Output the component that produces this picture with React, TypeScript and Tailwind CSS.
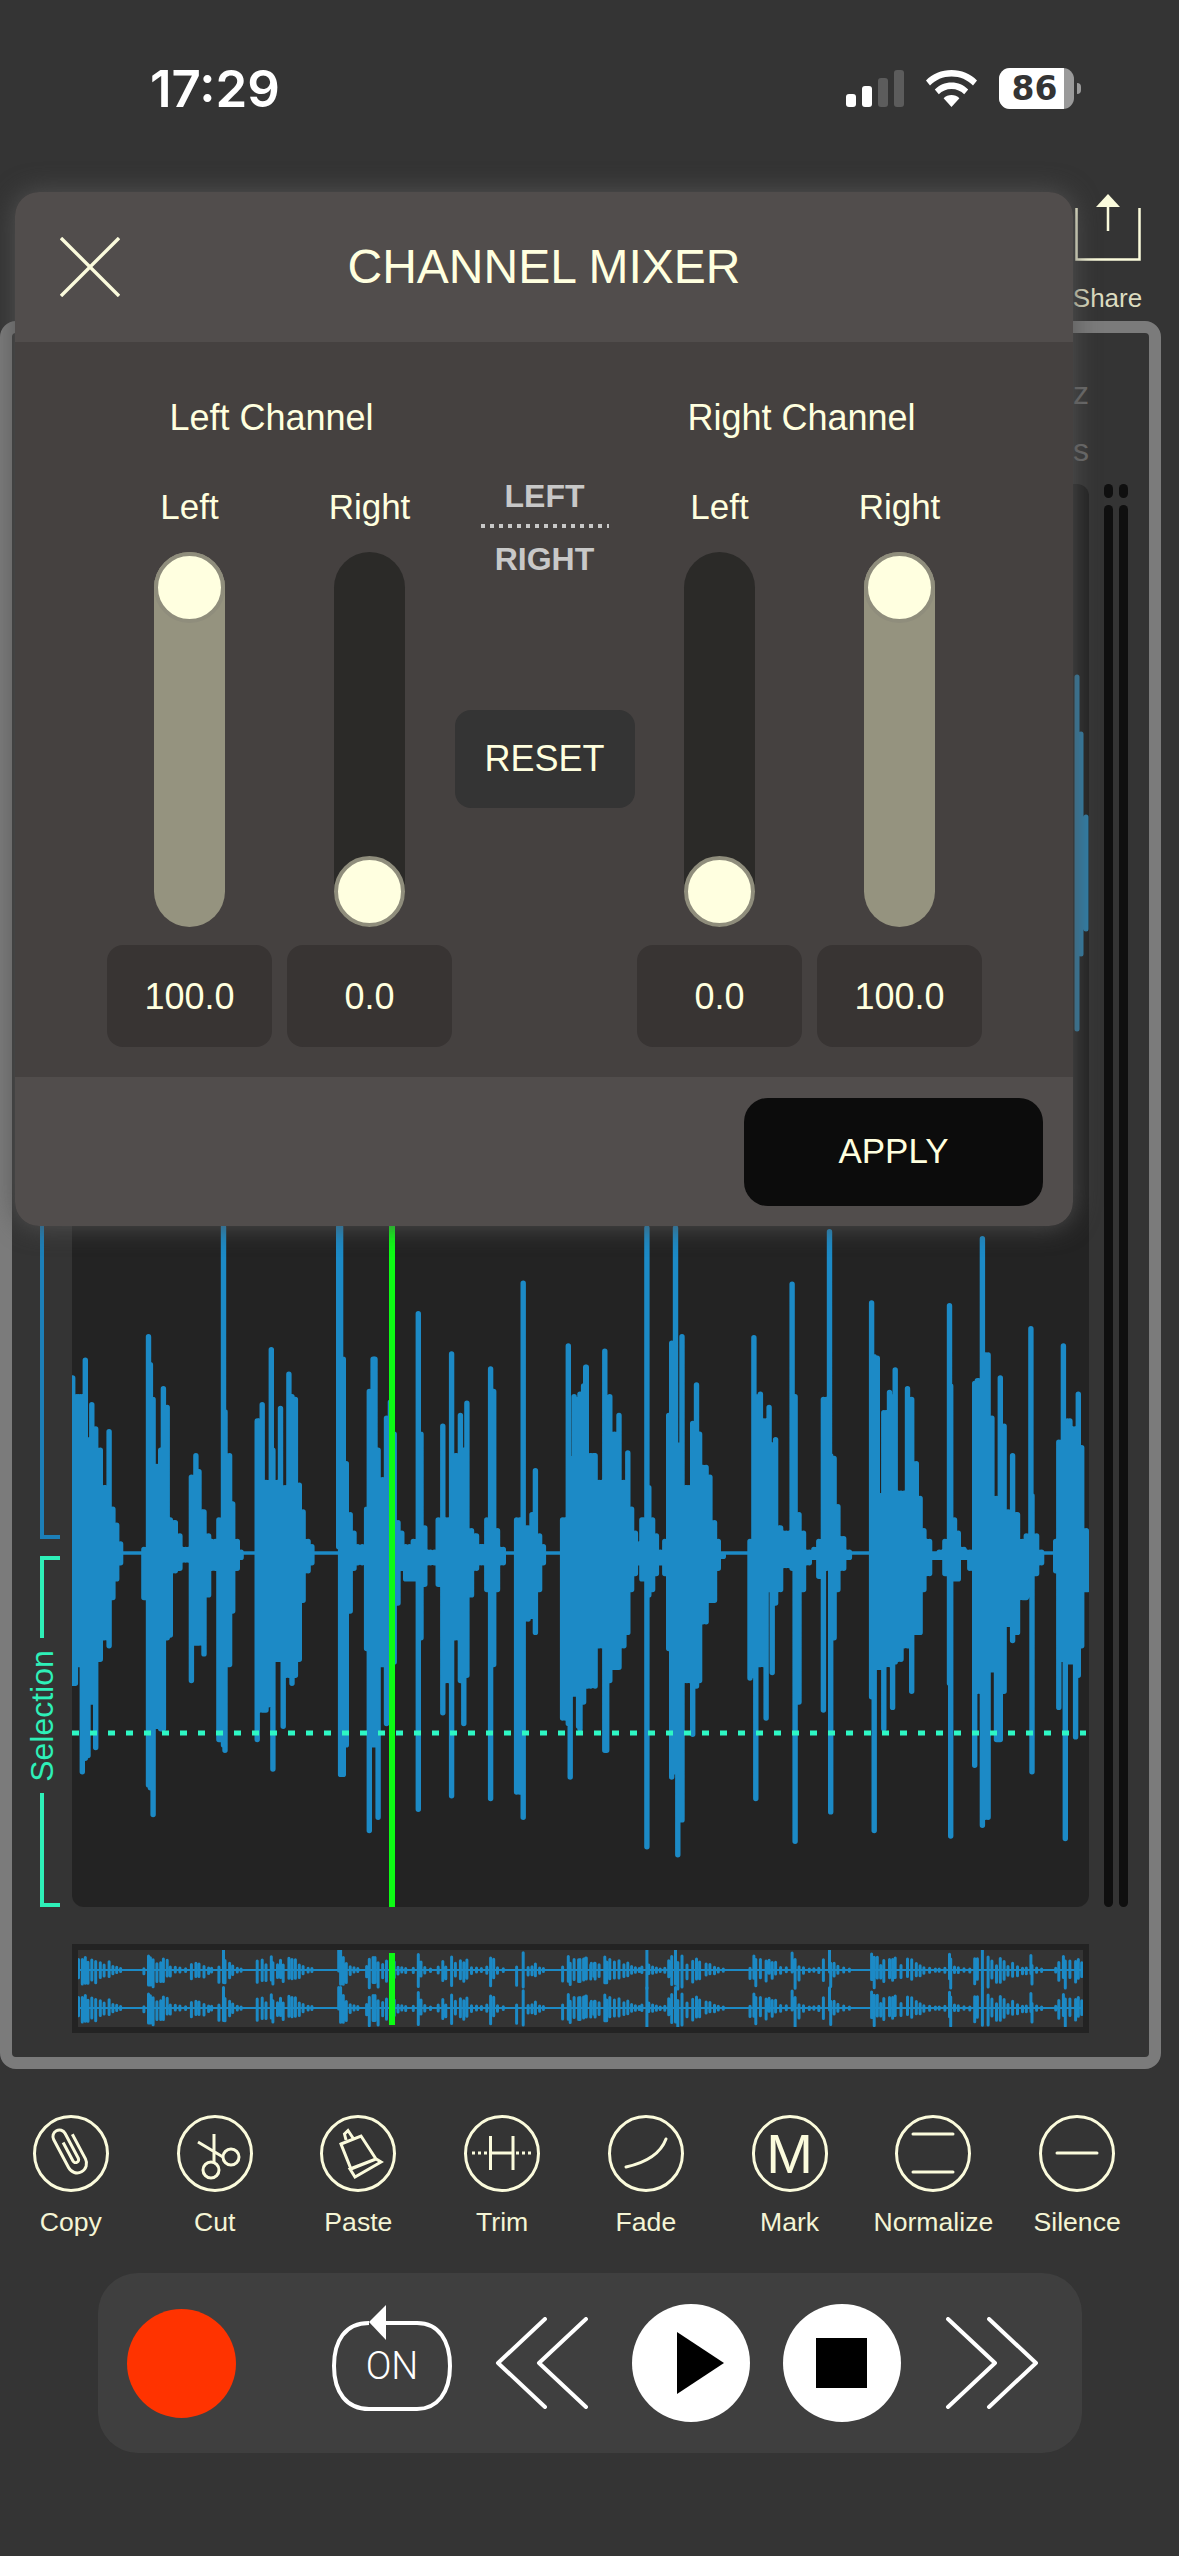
import React from "react";

const CREAM = "#fbfbdc";

// waveform peaks read off the screen, [x, top, bottom] in wave box pixels
const raw3: number[][] = [
  [190,295,865],[197,330,865],[205,330,830],[215,330,1030],[223,262,1005],[230,410,1000],[240,345,900],[250,390,985],[262,430,820],[272,500,780],[285,395,795],[295,540,705],[305,570,670],[315,605,640],
  [376,615,705],[388,218,1055],[393,270,1060],[400,335,1110],[410,460,945],[420,430,950],[427,315,950],[437,350,780],[445,560,775],[458,565,655],[470,590,650],[485,615,635],
  [500,480,860],[512,440,790],[520,470,790],[533,545,810],[545,590,700],[553,600,650],
  [572,560,970],[584,13,980],[588,358,990],[600,440,830],[608,530,730],[620,600,650],[630,620,630],
  [672,375,970],[685,345,915],[695,490,915],[709,242,905],[713,430,1025],[725,490,820],[733,352,820],[740,500,945],[755,288,850],[763,330,865],[772,335,850],[782,495,820],[792,545,710],[805,600,655],[815,610,640],
  [885,13,610],[890,13,1035],[897,260,1035],[905,455,980],[915,550,730],[925,585,650],[935,610,640],
  [958,540,800],[965,320,1140],[975,260,980],[980,260,980],[988,430,1115],[1000,485,830],[1010,370,940],[1020,340,830],[1030,400,825],[1040,565,715],[1050,585,650],[1060,610,670],
  [1080,600,670],[1093,175,1100],[1100,400,780],[1110,575,680],[1125,620,640],
  [1145,560,680],[1157,385,920],[1165,560,860],[1180,250,1075],[1190,440,780],[1203,365,860],[1212,430,940],[1220,342,850],[1232,580,700],[1245,590,650],[1258,610,640],
  [1272,560,690],[1282,278,1080],[1290,320,830],[1300,580,690],[1315,615,640],
  [1350,560,1068],[1367,118,1115],[1380,575,745],[1390,550,740],[1399,468,770],[1410,590,690],[1420,610,640],
  [1470,560,930],[1485,235,940],[1490,445,1040],[1500,330,885],[1512,335,945],[1525,310,900],[1532,275,870],[1545,440,790],[1555,440,870],
];
const raw4: number[][] = [
  [0,325,950],[15,275,830],[28,495,870],[38,440,800],[50,490,795],[65,245,990],[70,405,990],[78,330,860],[90,400,835],[102,365,835],[115,490,795],[125,435,770],[135,540,690],[145,585,660],[155,605,640],
  [162,560,670],[175,15,1170],[180,500,700],[190,560,690],[200,590,660],[210,620,640],
  [222,600,660],[232,365,800],[240,230,1040],[250,15,1030],[256,420,1185],[267,218,1120],[280,500,860],[295,380,960],[305,308,870],[313,400,860],[330,462,750],[340,480,710],[352,565,710],[362,600,650],[375,625,628],
  [445,600,855],[455,220,850],[460,330,1080],[472,325,830],[487,375,930],[495,350,690],[503,420,845],[512,410,715],[525,575,690],[540,585,645],
  [555,120,650],[563,330,1160],[573,550,900],[585,585,690],[600,620,640],[612,615,630],
  [625,600,665],[637,335,915],[653,22,650],[656,440,1105],[665,445,780],[675,535,690],[690,595,650],[705,620,630],
  [763,155,890],[770,255,1140],[778,258,835],[787,515,835],[795,360,950],[810,322,830],[818,330,910],[825,280,825],[840,510,820],[857,315,795],[868,335,880],[880,455,770],[890,520,770],[900,580,690],[915,600,660],[930,625,630],[940,620,630],
  [955,600,660],[967,160,865],[970,310,1150],[980,560,670],[990,585,670],[1005,615,630],
  [1020,620,650],[1033,305,1018],[1040,300,880],[1053,35,1130],[1068,252,1115],[1078,370,840],[1090,520,970],[1100,295,970],[1110,385,880],[1120,545,755],[1132,440,785],[1145,550,770],[1158,600,705],
  [1168,590,705],[1180,203,700],[1183,515,1030],[1195,590,660],[1208,620,640],
  [1245,600,655],[1253,415,910],[1265,235,820],[1270,375,1155],[1282,375,825],[1297,390,965],[1304,325,850],[1313,425,795],[1325,580,690],[1330,590,690],
];

const peaks: number[][] = [
  ...raw3.map(([x, t, b]) => [x / 2.613 - 72, t / 1.867 + 736, b / 1.867 + 736]),
  ...raw4.map(([x, t, b]) => [x / 2.617 + 508, t / 1.867 + 736, b / 1.867 + 736]),
];

function wavePath(list: number[][]) {
  let d = "";
  list.forEach((p, i) => {
    d += `M${p[0].toFixed(1)} ${p[1].toFixed(1)}V${p[2].toFixed(1)}`;
    const next = list[i + 1];
    if (next && next[0] - p[0] < 10) {
      const top = Math.max(p[1], next[1]);
      const bot = Math.min(p[2], next[2]);
      d += `M${((p[0] + next[0]) / 2).toFixed(1)} ${top.toFixed(1)}V${bot.toFixed(1)}`;
    }
  });
  return d;
}

const wave = wavePath(peaks);

function Waveform() {
  return (
    <svg viewBox="0 0 1017 1423" className="absolute inset-0 h-full w-full" fill="none">
      <g stroke="#1c8ac6" strokeLinecap="round">
        <path d={wave} strokeWidth="5.4" />
        <path d="M0 1069H1017" strokeWidth="3.6" />
        <path d="M1005 193V545M1009 250V470M1014 333V445" stroke="#2f7ea8" strokeWidth="5" />
      </g>
      <path d="M0 1249H1014" stroke="#2ef7c4" strokeWidth="5" strokeDasharray="7 11" />
      <rect x="317" y="0" width="6" height="1423" fill="#0dfb14" />
    </svg>
  );
}

function MiniChannel({ cy }: { cy: number }) {
  const d = peaks
    .filter((p) => p[1] > 700)
    .map((p) => {
      const top = cy - 0.06 * Math.max(0, 1069 - p[1]) - 1;
      const bot = cy + 0.06 * Math.max(0, p[2] - 1069) + 1;
      return `M${(p[0] - 6).toFixed(1)} ${top.toFixed(1)}V${bot.toFixed(1)}`;
    })
    .join("");
  return (
    <g stroke="#1c8ac6">
      <path d={d} strokeWidth="3" strokeLinecap="round" />
      <path d={`M0 ${cy}H1005`} strokeWidth="2" />
    </g>
  );
}

function Slider({ on }: { on: boolean }) {
  return (
    <div
      className={`flex h-[375px] w-[71px] flex-col rounded-full ${
        on ? "justify-start bg-[#95937f]" : "justify-end bg-[#2b2a28]"
      }`}
    >
      <div className="h-[71px] w-[71px] rounded-full border-[4px] border-[#8f8d7c] bg-[#ffffe0]" />
    </div>
  );
}

function Fader({ label, value, on }: { label: string; value: string; on: boolean }) {
  return (
    <div className="flex w-[165px] flex-col items-center">
      <div className="h-[44px] text-[35px] leading-[44px] text-[#ffffdf]">{label}</div>
      <div className="mt-[23px]">
        <Slider on={on} />
      </div>
      <div className="mt-[18px] flex h-[102px] w-full items-center justify-center rounded-[16px] bg-[#383433] pt-[2px] text-[36px] text-[#ffffdf]">
        {value}
      </div>
    </div>
  );
}

function ChannelGroup({ title, faders }: { title: string; faders: { label: string; value: string; on: boolean }[] }) {
  return (
    <div className="w-[345px]">
      <div className="h-[44px] pr-[16px] text-center text-[36px] leading-[44px] text-[#ffffdf]">{title}</div>
      <div className="mt-[45px] flex gap-[15px]">
        {faders.map((f, i) => (
          <Fader key={i} {...f} />
        ))}
      </div>
    </div>
  );
}

function ToolIcon({ children }: { children: React.ReactNode }) {
  return (
    <svg viewBox="0 0 76 77" className="h-[77px] w-[76px]" fill="none" stroke={CREAM} strokeWidth="3">
      <ellipse cx="38" cy="38.5" rx="36.5" ry="37" />
      {children}
    </svg>
  );
}

const tools: { name: string; icon: React.ReactNode }[] = [
  {
    name: "Copy",
    icon: (
      <path
        transform="rotate(-28 38 38)"
        d="M48 22V50a9.500 9.500 0 0 1-19 0V18a6.500 6.500 0 0 1 13 0V46a3 3 0 0 1-6 0V25"
      />
    ),
  },
  {
    name: "Cut",
    icon: (
      <>
        <circle cx="34" cy="55" r="8" />
        <circle cx="54" cy="42" r="8" />
        <path d="M37 19V47M21 27L46 42" />
      </>
    ),
  },
  {
    name: "Paste",
    icon: <path d="M21 29L41 21L56 44L31 54ZM26 25L24.500 19L28 15.500L33 23M30 54L56 44L61 47L35 62Z" />,
  },
  {
    name: "Trim",
    icon: (
      <>
        <path d="M26.500 21V55M49 21V55M26.500 38H49" />
        <path d="M8 38H24M52 38H68" strokeWidth="3" strokeDasharray="3 3" />
      </>
    ),
  },
  { name: "Fade", icon: <path d="M18 52C36 48 52 40 58 24" strokeLinecap="round" /> },
  { name: "Mark", icon: null },
  { name: "Normalize", icon: <path d="M18 19H58M18 57H58" strokeLinecap="round" /> },
  { name: "Silence", icon: <path d="M18 38H58" strokeLinecap="round" /> },
];

function Chevrons({ flip }: { flip?: boolean }) {
  return (
    <svg viewBox="0 0 94 92" className={`h-[92px] w-[94px] ${flip ? "-scale-x-100" : ""}`} fill="none" stroke="white" strokeWidth="4" strokeLinecap="round" strokeLinejoin="round">
      <path d="M50 2L3 46L50 90M91 2L44 46L91 90" />
    </svg>
  );
}

export default function App() {
  return (
    <div
      className="h-[2556px] w-[1179px] overflow-hidden bg-[#343434] text-[#ffffdf]"
      style={{ fontFamily: '"Liberation Sans", Arial, sans-serif' }}
    >
      {/* status bar */}
      <div className="flex h-[176px] items-center justify-between pl-[150px] pr-[98px]">
        <span className="text-[51px] font-semibold leading-none text-white" style={{ fontFamily: "Inter, sans-serif" }}>17:29</span>
        <div className="flex items-center">
          <div className="flex items-end gap-[6px]">
            <div className="h-[13px] w-[10px] rounded-[3px] bg-white" />
            <div className="h-[21px] w-[10px] rounded-[3px] bg-white" />
            <div className="h-[29px] w-[10px] rounded-[3px] bg-[#5c5c5c]" />
            <div className="h-[37px] w-[10px] rounded-[3px] bg-[#5c5c5c]" />
          </div>
          <svg viewBox="0 0 51 37" className="ml-[22px] h-[37px] w-[51px]" fill="white">
            <path d="M25.500 0C15.500 0 6.500 3.800 0 10.500L4 15.500C9.500 9.800 17 6.500 25.500 6.500C34 6.500 41.500 9.800 47 15.500L51 10.500C44.500 3.800 35.500 0 25.500 0Z" />
            <path d="M25.500 12.500C19 12.500 13.200 15 8.800 19.500L12.800 24.300C16 21 20.500 19 25.500 19C30.500 19 35 21 38.200 24.300L42.200 19.500C37.800 15 32 12.500 25.500 12.500Z" />
            <path d="M25.500 25C22.500 25 19.700 26.200 17.600 28.200L25.500 37L33.400 28.200C31.300 26.200 28.500 25 25.500 25Z" />
          </svg>
          <div className="relative ml-[22px] flex h-[41px] w-[75px] overflow-hidden rounded-[11px] bg-[#9a9a9a]">
            <div className="flex w-[65px] items-center justify-center bg-white pl-[6px] text-[33px] font-bold leading-none text-[#343434]" style={{ fontFamily: '"DejaVu Sans", sans-serif' }}>
              86
            </div>
          </div>
          <div className="ml-[3px] h-[11px] w-[4px] rounded-r-full bg-[#9a9a9a]" />
        </div>
      </div>

      {/* share */}
      <div className="flex h-[145px] justify-end pr-[37px] pt-[18px]">
        <div className="flex w-[69px] flex-col items-center">
          <svg viewBox="0 0 66 67" className="h-[67px] w-[66px]" fill="none" stroke={CREAM} strokeWidth="2.5">
            <path d="M1.500 14V65.500H64.500V14M33 8V37" />
            <path d="M21 13L33 0L45 13Z" fill={CREAM} stroke="none" />
          </svg>
          <span className="mt-[22px] text-[26px] leading-[30px] text-[#dcdcc0]">Share</span>
        </div>
      </div>

      {/* main panel */}
      <div className="relative h-[1748px] w-[1161px] rounded-[16px] border-[12px] border-[#7b7b7b] bg-[#343434]">
        <div className="flex h-[151px] flex-col items-end pr-[60px] pt-[44px] text-[32px] leading-[32px] text-[#6a6a6a]">
          <span>Hz</span>
          <span className="mt-[25px]">ms</span>
        </div>
        <div className="flex h-[1423px]">
          {/* channel brackets */}
          <div className="flex w-[60px] flex-col items-end">
            <div className="h-[1055px] w-[32px]">
              <div className="h-full w-[20px] border-b-[4px] border-l-[4px] border-[#1c7fb8]" />
            </div>
            <div className="mt-[17px] flex h-[351px] w-[32px] flex-col">
              <div className="h-[82px] w-[20px] border-l-[4px] border-t-[4px] border-[#2ef0b8]" />
              <div className="flex h-[155px] w-[20px] items-center justify-center">
                <span className="-rotate-90 translate-x-[-8px] text-[32px] leading-none text-[#2ef0b8]">Selection</span>
              </div>
              <div className="h-[114px] w-[20px] border-b-[4px] border-l-[4px] border-[#2ef0b8]" />
            </div>
          </div>

          <div className="relative h-full w-[1017px] overflow-hidden rounded-[12px] bg-[#232323]">
            <Waveform />
          </div>

          {/* level meters */}
          <div className="ml-[15px] flex gap-[6px]">
            {[0, 1].map((m) => (
              <div key={m} className="flex w-[9px] flex-col">
                <div className="h-[14px] rounded-full bg-[#0f0f0f]" />
                <div className="mt-[7px] flex-1 rounded-full bg-[#0f0f0f]" />
              </div>
            ))}
          </div>
        </div>

        {/* overview */}
        <div className="ml-[60px] mt-[37px] h-[89px] w-[1017px] bg-[#232323] p-[6px]">
          <div className="relative h-[77px] w-full bg-[#343434]">
            <svg viewBox="0 0 1005 77" className="absolute inset-0 h-full w-full" fill="none">
              <MiniChannel cy={20} />
              <MiniChannel cy={58} />
              <rect x="311" y="3" width="6" height="72" fill="#0dfb14" />
            </svg>
          </div>
        </div>
      </div>

      {/* edit tools */}
      <div className="-ml-[1px] mt-[46px] grid w-[1150px] grid-cols-8">
        {tools.map((t) => (
          <div key={t.name} className="flex flex-col items-center">
            {t.name === "Mark" ? (
              <div className="flex h-[77px] w-[76px] items-center justify-center rounded-full border-[3px] border-[#fbfbdc] text-[56px] leading-none text-[#fbfbdc]">
                M
              </div>
            ) : (
              <ToolIcon>{t.icon}</ToolIcon>
            )}
            <span className="mt-[14px] text-[26.6px] leading-[32px] text-[#f5f5d5]">{t.name}</span>
          </div>
        ))}
      </div>

      {/* transport */}
      <div className="ml-[98px] mt-[35px] flex h-[180px] w-[984px] items-center rounded-[40px] bg-[#3f3f3f] pl-[29px]">
        <div className="h-[109px] w-[109px] rounded-full bg-[#ff3300]" />
        <svg viewBox="0 0 122 106" className="mb-[10px] ml-[95px] h-[106px] w-[122px]" fill="none" stroke="white" strokeWidth="4">
          <path d="M38 18C14 18 3 36 3 61C3 88 16 104 38 104H86C106 104 119 88 119 61C119 36 108 18 86 18H54" />
          <path d="M38 17L55 0V35Z" fill="white" stroke="none" />
          <text x="61" y="74" textAnchor="middle" fontSize="38" fontWeight="300" fill="white" stroke="none" fontFamily="Roboto, sans-serif">ON</text>
        </svg>
        <div className="ml-[42px]"><Chevrons /></div>
        <div className="ml-[43px] flex h-[118px] w-[118px] items-center justify-center rounded-full bg-white">
          <svg viewBox="0 0 47 62" className="ml-[18px] h-[62px] w-[47px]"><path d="M0 0L47 31L0 62Z" fill="black" /></svg>
        </div>
        <div className="ml-[33px] flex h-[118px] w-[118px] items-center justify-center rounded-full bg-white">
          <div className="mr-[2px] h-[50px] w-[51px] bg-black" />
        </div>
        <div className="ml-[44px]"><Chevrons flip /></div>
      </div>

      {/* channel mixer dialog */}
      <div className="absolute left-[15px] top-[192px] w-[1058px] overflow-hidden rounded-[24px] shadow-[0_0_26px_rgba(84,84,84,0.95)]">
        <div className="relative flex h-[150px] items-center justify-center bg-[#514d4c]">
          <svg viewBox="0 0 60 60" className="absolute left-[45px] top-[45px] h-[60px] w-[60px]" stroke={CREAM} strokeWidth="3.4">
            <path d="M1 1L59 59M59 1L1 59" />
          </svg>
          <span className="text-[48px] leading-none text-[#ffffdf]">CHANNEL MIXER</span>
        </div>
        <div className="flex h-[735px] bg-[#454140] pl-[92px] pt-[54px]">
          <ChannelGroup
            title="Left Channel"
            faders={[
              { label: "Left", value: "100.0", on: true },
              { label: "Right", value: "0.0", on: false },
            ]}
          />
          <div className="flex w-[185px] flex-col items-center pt-[82px] text-[32px] font-bold leading-[36px] text-[#c8c8c8]">
            <span>LEFT</span>
            <div className="mt-[10px] h-[4px] w-[128px] bg-[repeating-linear-gradient(90deg,#c8c8c8_0_4px,transparent_4px_9px)]" />
            <span className="mt-[13px]">RIGHT</span>
            <div className="mt-[133px] flex h-[98px] w-[180px] items-center justify-center rounded-[16px] bg-[#343434] text-[36px] font-normal text-[#ffffdf]">
              RESET
            </div>
          </div>
          <ChannelGroup
            title="Right Channel"
            faders={[
              { label: "Left", value: "0.0", on: false },
              { label: "Right", value: "100.0", on: true },
            ]}
          />
        </div>
        <div className="flex h-[149px] items-center justify-end bg-[#514d4c] pr-[30px]">
          <div className="flex h-[108px] w-[299px] items-center justify-center rounded-[24px] bg-[#0c0c0c] text-[35px] text-[#ffffdf]">
            APPLY
          </div>
        </div>
      </div>
    </div>
  );
}
